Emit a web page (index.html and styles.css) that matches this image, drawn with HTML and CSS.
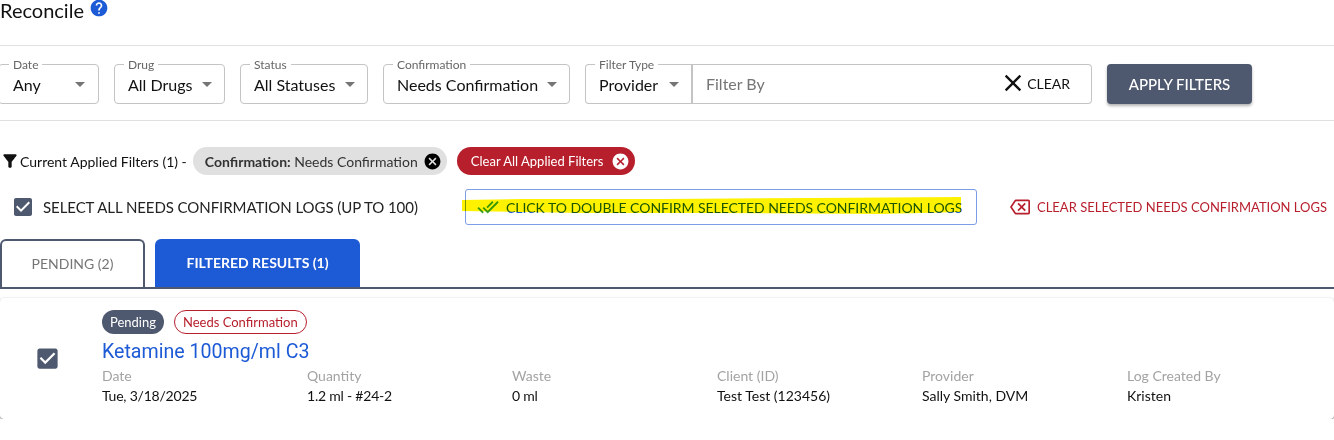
FILE: index.html
```html
<!DOCTYPE html>
<html lang="en">
<head>
    <meta charset="UTF-8">
    <title>Reconcile</title>
    <link rel="stylesheet" href="styles.css">
</head>
<body>
    <header class="page-head">
        <h1>Reconcile</h1>
        <svg class="help-icon" viewBox="0 0 24 24"><path d="M12 2C6.48 2 2 6.48 2 12s4.48 10 10 10 10-4.48 10-10S17.52 2 12 2zm1 17h-2v-2h2v2zm2.07-7.75l-.9.92C13.45 12.9 13 13.5 13 15h-2v-.5c0-1.1.45-2.1 1.17-2.83l1.24-1.26c.37-.36.59-.86.59-1.41 0-1.1-.9-2-2-2s-2 .9-2 2H8c0-2.21 1.79-4 4-4s4 1.79 4 4c0 .88-.36 1.68-.93 2.25z"/></svg>
    </header>

    <section class="filters">
        <div class="field field-date">
            <span class="field-label">Date</span>
            <span class="field-value">Any</span>
            <span class="caret"></span>
        </div>
        <div class="field field-drug">
            <span class="field-label">Drug</span>
            <span class="field-value">All Drugs</span>
            <span class="caret"></span>
        </div>
        <div class="field field-status">
            <span class="field-label">Status</span>
            <span class="field-value">All Statuses</span>
            <span class="caret"></span>
        </div>
        <div class="field field-confirm">
            <span class="field-label">Confirmation</span>
            <span class="field-value">Needs Confirmation</span>
            <span class="caret"></span>
        </div>
        <div class="filter-group">
            <div class="field field-type">
                <span class="field-label">Filter Type</span>
                <span class="field-value">Provider</span>
                <span class="caret"></span>
            </div>
            <div class="filter-by">
                <span class="placeholder">Filter By</span>
                <span class="clear-btn">
                    <svg viewBox="0 0 24 24"><path d="M19 6.41L17.59 5 12 10.59 6.41 5 5 6.41 10.59 12 5 17.59 6.41 19 12 13.41 17.59 19 19 17.59 13.41 12z"/></svg>
                    CLEAR
                </span>
            </div>
        </div>
        <button class="apply-btn">APPLY FILTERS</button>
    </section>

    <section class="applied">
        <svg class="funnel" viewBox="0 0 24 24"><path d="M4.25 5.61C6.27 8.2 10 13 10 13v6c0 .55.45 1 1 1h2c.55 0 1-.45 1-1v-6s3.72-4.8 5.74-7.39c.51-.66.04-1.61-.79-1.61H5.04c-.83 0-1.3.95-.79 1.61z"/></svg>
        <span class="applied-text">Current Applied Filters (1) -</span>
        <span class="chip chip-grey">
            <span><b>Confirmation:</b> Needs Confirmation</span>
            <svg viewBox="0 0 24 24"><path d="M12 2C6.47 2 2 6.47 2 12s4.47 10 10 10 10-4.47 10-10S17.53 2 12 2zm5 13.59L15.59 17 12 13.41 8.41 17 7 15.59 10.59 12 7 8.41 8.41 7 12 10.59 15.59 7 17 8.41 13.41 12 17 15.59z"/></svg>
        </span>
        <span class="chip chip-red">
            <span>Clear All Applied Filters</span>
            <svg viewBox="0 0 24 24"><path d="M12 2C6.47 2 2 6.47 2 12s4.47 10 10 10 10-4.47 10-10S17.53 2 12 2zm5 13.59L15.59 17 12 13.41 8.41 17 7 15.59 10.59 12 7 8.41 8.41 7 12 10.59 15.59 7 17 8.41 13.41 12 17 15.59z"/></svg>
        </span>
    </section>

    <section class="actions">
        <label class="select-all">
            <svg class="check-icon" viewBox="0 0 24 24"><path d="M19 3H5c-1.11 0-2 .9-2 2v14c0 1.1.89 2 2 2h14c1.11 0 2-.9 2-2V5c0-1.1-.89-2-2-2zm-9 14l-5-5 1.41-1.41L10 14.17l7.59-7.59L19 8l-9 9z"/></svg>
            SELECT ALL NEEDS CONFIRMATION LOGS (UP TO 100)
        </label>
        <div class="confirm-btn">
            <svg class="done-icon" viewBox="0 0 24 24"><path d="M18 7l-1.41-1.41-6.34 6.34 1.41 1.41L18 7zm4.24-1.41L11.66 16.17 7.48 12l-1.41 1.41L11.66 19l12-12-1.42-1.41zM.41 13.41L6 19l1.41-1.41L1.83 12 .41 13.41z"/></svg>
            <span>CLICK TO DOUBLE CONFIRM SELECTED NEEDS CONFIRMATION LOGS</span>
            <!-- marker scribble drawn over the button -->
            <svg class="marker" viewBox="0 0 500 20" preserveAspectRatio="none"><path d="M0 3 L60 2 L200 2 L350 1 L499 0 L499 15 L420 17 L250 16 L120 16 L60 15 L0 14 Z"/></svg>
        </div>
        <div class="clear-selected">
            <svg viewBox="0 0 24 24"><path d="M22 3H7c-.69 0-1.23.35-1.59.88L0 12l5.41 8.11c.36.53.9.89 1.59.89h15c1.1 0 2-.9 2-2V5c0-1.1-.9-2-2-2zm0 16H7.07L2.4 12l4.66-7H22v14zm-11.59-2L14 13.41 17.59 17 19 15.59 15.41 12 19 8.41 17.59 7 14 10.59 10.41 7 9 8.41 12.59 12 9 15.59z"/></svg>
            CLEAR SELECTED NEEDS CONFIRMATION LOGS
        </div>
    </section>

    <nav class="tabs">
        <div class="tab tab-pending">PENDING (2)</div>
        <div class="tab tab-active">FILTERED RESULTS (1)</div>
    </nav>

    <article class="log-card">
        <svg class="log-check" viewBox="0 0 24 24"><path d="M19 3H5c-1.11 0-2 .9-2 2v14c0 1.1.89 2 2 2h14c1.11 0 2-.9 2-2V5c0-1.1-.89-2-2-2zm-9 14l-5-5 1.41-1.41L10 14.17l7.59-7.59L19 8l-9 9z"/></svg>
        <div class="log-body">
            <div class="badges">
                <span class="badge badge-pending">Pending</span>
                <span class="badge badge-needs">Needs Confirmation</span>
            </div>
            <h3 class="drug-name">Ketamine 100mg/ml C3</h3>
            <div class="log-grid">
                <div><div class="log-label">Date</div><div class="log-value log-num">Tue, 3/18/2025</div></div>
                <div><div class="log-label">Quantity</div><div class="log-value log-num">1.2 ml - #24-2</div></div>
                <div><div class="log-label">Waste</div><div class="log-value log-num">0 ml</div></div>
                <div><div class="log-label">Client (ID)</div><div class="log-value">Test Test (123456)</div></div>
                <div><div class="log-label">Provider</div><div class="log-value">Sally Smith, DVM</div></div>
                <div><div class="log-label">Log Created By</div><div class="log-value">Kristen</div></div>
            </div>
        </div>
    </article>
</body>
</html>
```

FILE: styles.css
```css
body {
    font-family: 'Lato', 'Liberation Sans', sans-serif;
    margin: 0;
    background: white;
    color: #111;
    overflow: hidden;
}
svg {
    display: block;
    fill: currentColor;
    flex-shrink: 0;
}

.page-head {
    height: 45px;
    display: flex;
    align-items: flex-start;
    gap: 5px;
    border-bottom: 1px solid #e0e0e0;
}
h1 {
    margin: 0;
    font-size: 20px;
    font-weight: 400;
    line-height: 20px;
}
.help-icon {
    width: 20px;
    height: 20px;
    margin-top: -2px;
    color: #1d5ad6;
}

.filters {
    display: flex;
    gap: 15px;
    margin-left: -2px;
    padding: 18px 0 16px;
    border-bottom: 1px solid #e0e0e0;
}
.field {
    position: relative;
    box-sizing: border-box;
    height: 40px;
    display: flex;
    align-items: center;
    justify-content: space-between;
    padding: 0 12px 0 13px;
    border: 1px solid #c4c4c4;
    border-radius: 4px;
}
.field-date { width: 101px; padding: 0 13px 0 14px; }
.field-date .field-label { left: 10px; }
.field-drug { width: 111px; }
.field-status { width: 128px; }
.field-confirm { width: 187px; }
.field-type {
    width: 108px;
    border-radius: 4px 0 0 4px;
    border-right: 2px solid #c4c4c4;
}
.field-label {
    position: absolute;
    top: -7px;
    left: 9px;
    padding: 0 4px;
    background: white;
    font-size: 12px;
    line-height: 14px;
    color: #666;
}
.field-value {
    font-size: 16px;
}
.caret {
    width: 0;
    height: 0;
    border-left: 5px solid transparent;
    border-right: 5px solid transparent;
    border-top: 5px solid #757575;
}
.filter-group {
    display: flex;
}
.filter-by {
    box-sizing: border-box;
    width: 399px;
    height: 40px;
    display: flex;
    align-items: center;
    justify-content: space-between;
    padding: 0 21px 2px 13px;
    border: 1px solid #c4c4c4;
    border-left: none;
    border-radius: 0 4px 4px 0;
}
.placeholder {
    font-size: 16px;
    color: #757575;
}
.clear-btn {
    display: flex;
    align-items: center;
    font-size: 14px;
}
.clear-btn svg {
    width: 28px;
    height: 28px;
}
.apply-btn {
    width: 145px;
    height: 40px;
    border: none;
    border-radius: 4px;
    background-color: #4e586e;
    color: white;
    font-family: inherit;
    font-size: 15px;
    font-weight: 500;
    box-shadow: 0 2px 3px rgba(0, 0, 0, 0.3);
}

.applied {
    display: flex;
    align-items: center;
    height: 28px;
    margin-top: 26px;
    font-size: 14px;
    white-space: nowrap;
}
.funnel {
    width: 20px;
    height: 20px;
}
.applied-text {
    margin-right: 6px;
}
.chip {
    height: 28px;
    box-sizing: border-box;
    display: flex;
    align-items: center;
    justify-content: space-between;
    border-radius: 14px;
    padding: 0 5px 0 12px;
}
.chip svg {
    width: 19px;
    height: 19px;
}
.chip-grey {
    width: 254px;
    background: #e0e0e0;
    color: #333;
}
.chip-grey svg {
    color: #000;
}
.chip-red {
    width: 178px;
    margin-left: 10px;
    padding-left: 14px;
    background: #b71f2d;
    color: white;
    font-size: 13px;
}

.actions {
    display: flex;
    align-items: center;
    height: 36px;
    margin-top: 14px;
    white-space: nowrap;
}
.select-all {
    flex-shrink: 0;
    width: 465px;
    display: flex;
    align-items: center;
    gap: 8px;
    padding-left: 11px;
    box-sizing: border-box;
    font-size: 15px;
    letter-spacing: -0.07px;
    color: #222;
}
.check-icon {
    width: 24px;
    height: 24px;
    color: #4e586e;
}
.confirm-btn {
    position: relative;
    flex-shrink: 0;
    box-sizing: border-box;
    width: 512px;
    height: 36px;
    display: flex;
    align-items: center;
    gap: 7px;
    padding-left: 11px;
    border: 1px solid #7d9de8;
    border-radius: 3px;
    color: #1d5ad6;
    font-size: 14px;
    letter-spacing: -0.05px;
}
.done-icon {
    width: 22px;
    height: 22px;
    color: #3aa12e;
}
.marker {
    position: absolute;
    left: -4px;
    top: 7px;
    width: 500px;
    height: 20px;
    color: #fff200;
    mix-blend-mode: multiply;
}
.clear-selected {
    display: flex;
    align-items: center;
    gap: 7px;
    margin-left: 33px;
    color: #b71f2d;
    font-size: 13px;
}
.clear-selected svg {
    width: 20px;
    height: 20px;
}

.tabs {
    display: flex;
    gap: 10px;
    height: 48px;
    margin-top: 14px;
    border-bottom: 2px solid #4e586e;
}
.tab {
    box-sizing: border-box;
    display: flex;
    align-items: center;
    justify-content: center;
    padding-bottom: 2px;
    border-radius: 6px 6px 0 0;
    font-size: 14px;
}
.tab-pending {
    width: 145px;
    border: 2px solid #4e586e;
    border-bottom: none;
    color: #757575;
}
.tab-active {
    width: 205px;
    background: #1d5ad6;
    color: white;
    font-weight: 700;
}

.log-card {
    display: flex;
    align-items: center;
    box-sizing: border-box;
    height: 121px;
    margin-top: 9px;
    border-radius: 4px;
    box-shadow: 0 1px 1px rgba(0, 0, 0, 0.4), 0 0 2px rgba(0, 0, 0, 0.2);
}
.log-check {
    width: 27px;
    height: 27px;
    margin-left: 34px;
    color: #4e586e;
}
.log-body {
    align-self: flex-start;
    margin-left: 41px;
    padding-top: 12px;
    flex: 1;
}
.badges {
    display: flex;
    gap: 10px;
}
.badge {
    box-sizing: border-box;
    height: 24px;
    display: flex;
    align-items: center;
    padding: 0 8px;
    border-radius: 12px;
    font-size: 13px;
}
.badge-pending {
    background: #4e586e;
    color: white;
}
.badge-needs {
    border: 1px solid #b71f2d;
    color: #b71f2d;
}
.drug-name {
    margin: 6px 0 2px;
    font-family: 'Roboto', sans-serif;
    font-size: 19.6px;
    font-weight: 400;
    line-height: 24px;
    color: #1d5ad6;
}
.log-grid {
    display: grid;
    grid-template-columns: repeat(6, 205px);
    font-size: 14px;
    line-height: 20px;
}
.log-label {
    color: #a3a3a3;
}
.log-value {
    color: #111;
}
.log-num {
    letter-spacing: -0.22px;
}
```
